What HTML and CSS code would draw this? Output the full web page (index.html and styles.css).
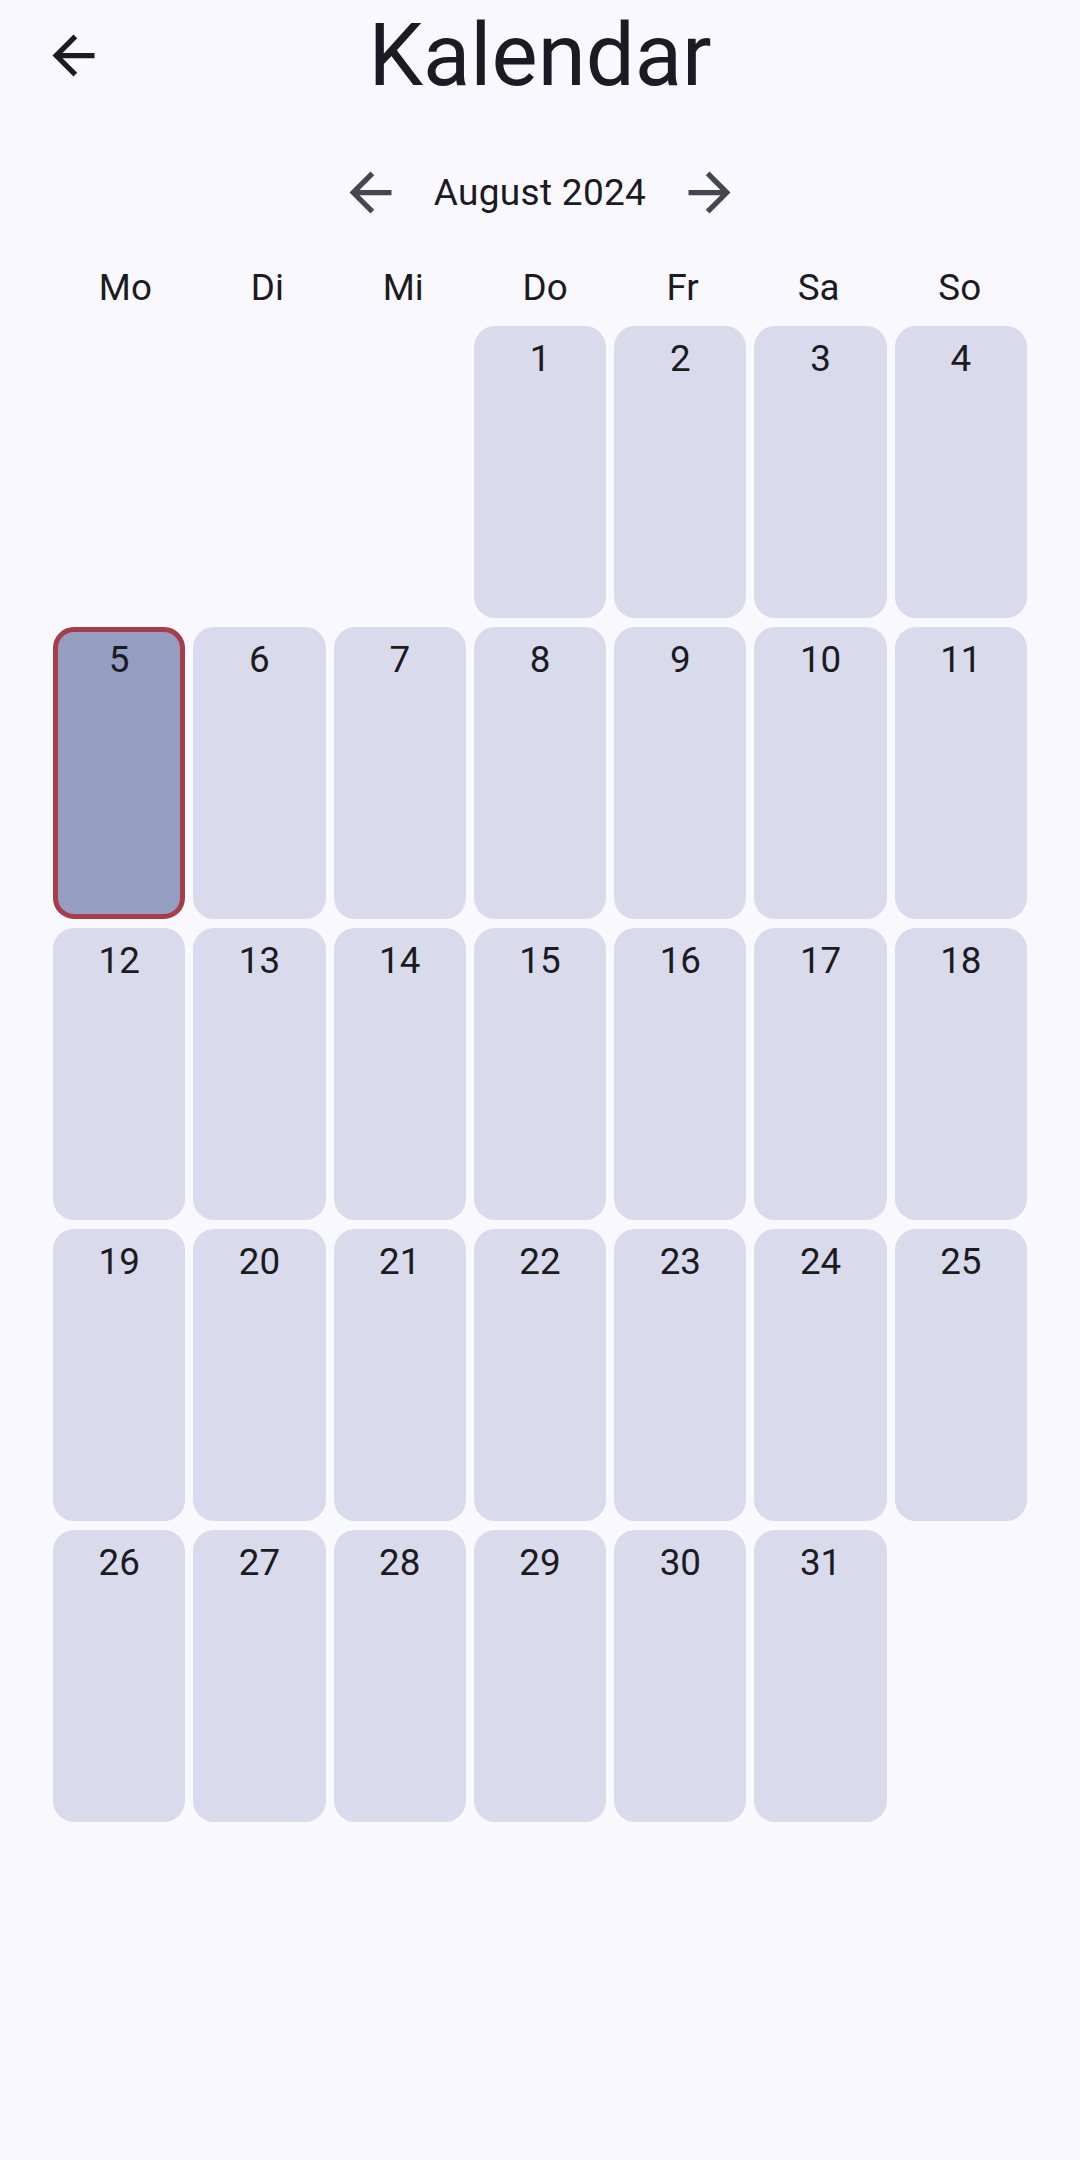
FILE: index.html
```html
<!DOCTYPE html>
<html lang="de">
<head>
<meta charset="utf-8">
<title>Kalendar</title>
<link rel="stylesheet" href="styles.css">
</head>
<body>
<div class="app">
  <header class="topbar">
    <div class="topbar-left">
      <svg class="icon icon-dark" viewBox="0 0 24 24"><path d="M20 11H7.83l5.59-5.59L12 4l-8 8 8 8 1.41-1.41L7.83 13H20v-2z"/></svg>
    </div>
    <h1 class="title">Kalendar</h1>
    <div class="topbar-right"></div>
  </header>

  <nav class="monthnav">
    <button class="iconbtn"><svg class="icon icon-grey" viewBox="0 0 24 24"><path d="M20 11H7.83l5.59-5.59L12 4l-8 8 8 8 1.41-1.41L7.83 13H20v-2z"/></svg></button>
    <span class="month">August 2024</span>
    <button class="iconbtn"><svg class="icon icon-grey" viewBox="0 0 24 24"><path d="M12 4l-1.41 1.41L16.17 11H4v2h12.17l-5.58 5.59L12 20l8-8z"/></svg></button>
  </nav>

  <div class="weekdays">
    <span>Mo</span><span>Di</span><span>Mi</span><span>Do</span><span>Fr</span><span>Sa</span><span>So</span>
  </div>

  <div class="grid">
    <div class="empty"></div><div class="empty"></div><div class="empty"></div>
    <div class="day">1</div><div class="day">2</div><div class="day">3</div><div class="day">4</div>
    <div class="day selected">5</div><div class="day">6</div><div class="day">7</div><div class="day">8</div><div class="day">9</div><div class="day">10</div><div class="day">11</div>
    <div class="day">12</div><div class="day">13</div><div class="day">14</div><div class="day">15</div><div class="day">16</div><div class="day">17</div><div class="day">18</div>
    <div class="day">19</div><div class="day">20</div><div class="day">21</div><div class="day">22</div><div class="day">23</div><div class="day">24</div><div class="day">25</div>
    <div class="day">26</div><div class="day">27</div><div class="day">28</div><div class="day">29</div><div class="day">30</div><div class="day">31</div>
  </div>
</div>
</body>
</html>
```

FILE: styles.css
```css
* { box-sizing: border-box; }
html, body {
  margin: 0;
  padding: 0;
  background: #FAF8FF;
}
body {
  width: 1080px;
  height: 2160px;
  font-family: Roboto, "Noto Sans", sans-serif;
  color: #1B1B21;
}
.app {
  display: flex;
  flex-direction: column;
}
.topbar {
  margin-top: 4px;
  height: 102px;
  display: grid;
  grid-template-columns: 1fr auto 1fr;
  align-items: center;
}
.topbar-left {
  padding-left: 42px;
  display: flex;
  align-items: center;
}
.title {
  margin: 0;
  font-size: 87px;
  font-weight: 400;
  line-height: 102px;
  color: #1B1B21;
}
.icon {
  width: 63px;
  height: 63px;
  display: block;
}
.icon-dark { fill: #1B1B21; }
.icon-grey { fill: #46464F; }
.monthnav {
  margin-top: 23px;
  height: 126px;
  display: flex;
  justify-content: center;
  align-items: center;
}
.iconbtn {
  width: 126px;
  height: 126px;
  border: 0;
  padding: 0;
  background: transparent;
  display: flex;
  align-items: center;
  justify-content: center;
}
.month {
  font-size: 37px;
  line-height: 43px;
  letter-spacing: 0.3px;
  color: #1B1B21;
}
.weekdays {
  margin-top: 11px;
  height: 43px;
  display: flex;
  justify-content: space-evenly;
  font-size: 36.75px;
  line-height: 43px;
}
.grid {
  margin-top: 17px;
  padding: 0 53px;
  display: grid;
  grid-template-columns: repeat(7, 1fr);
  grid-auto-rows: 292px;
  column-gap: 8px;
  row-gap: 9px;
}
.day {
  background: #D9DAEB;
  border-radius: 21px;
  padding-top: 11px;
  text-align: center;
  font-size: 36.75px;
  line-height: 43px;
  color: #1B1B21;
}
.day.selected {
  background: #959EC0;
  border: 5px solid #A63D4A;
  padding-top: 6px;
}
```
